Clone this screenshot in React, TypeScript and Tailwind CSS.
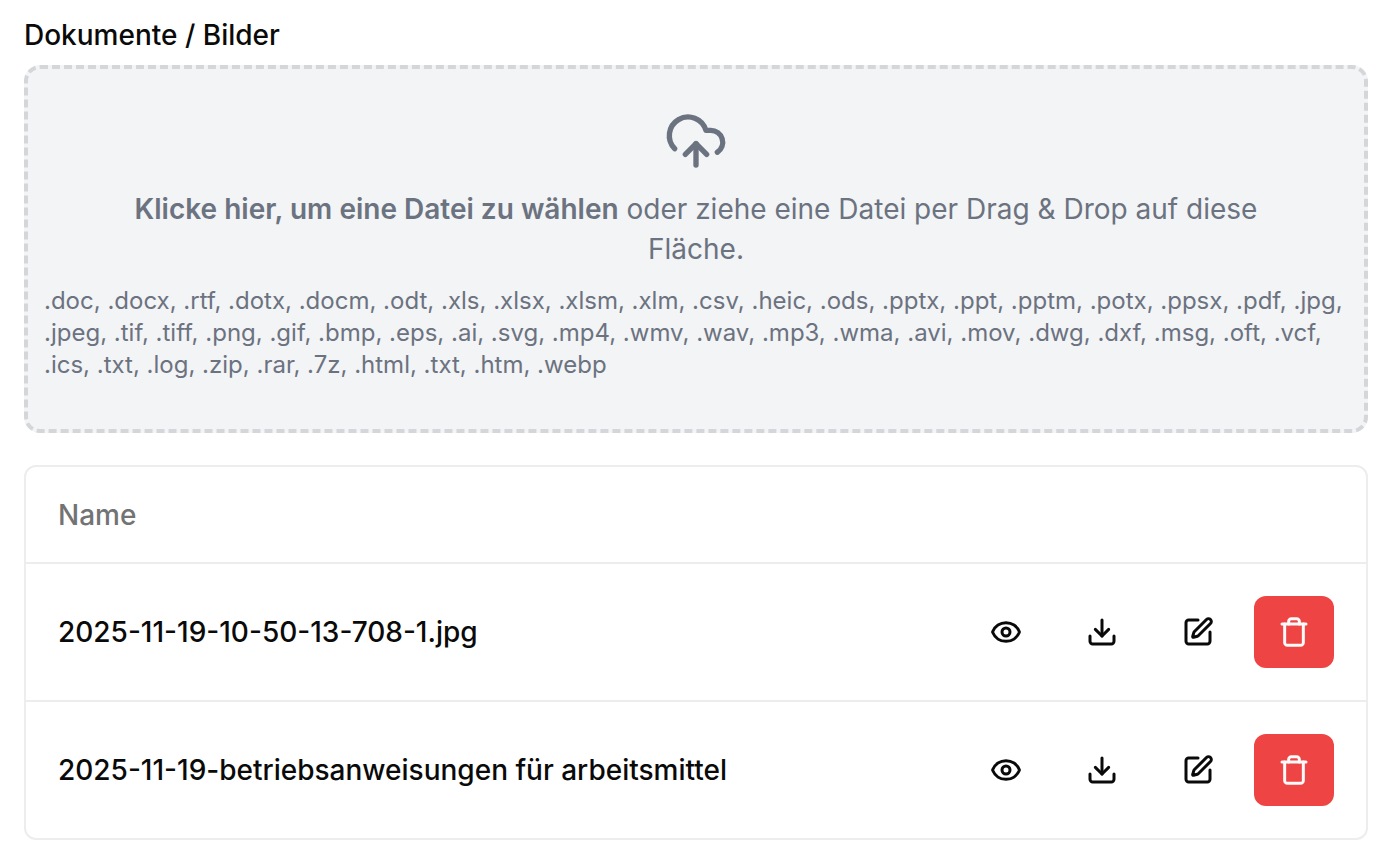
import React from 'react';
import { CloudUpload, Download, Eye, SquarePen, Trash } from 'lucide-react';

const acceptedTypes = [
  '.doc', '.docx', '.rtf', '.dotx', '.docm', '.odt', '.xls', '.xlsx', '.xlsm', '.xlm', '.csv', '.heic', '.ods',
  '.pptx', '.ppt', '.pptm', '.potx', '.ppsx', '.pdf', '.jpg', '.jpeg', '.tif', '.tiff', '.png', '.gif', '.bmp',
  '.eps', '.ai', '.svg', '.mp4', '.wmv', '.wav', '.mp3', '.wma', '.avi', '.mov', '.dwg', '.dxf', '.msg', '.oft',
  '.vcf', '.ics', '.txt', '.log', '.zip', '.rar', '.7z', '.html', '.txt', '.htm', '.webp',
];

const files = ['2025-11-19-10-50-13-708-1.jpg', '2025-11-19-betriebsanweisungen für arbeitsmittel'];

const IconButton = ({ label, danger = false, children }: { label: string; danger?: boolean; children: React.ReactNode }) => (
  <button
    type="button"
    aria-label={label}
    className={`flex h-18 w-20 items-center justify-center rounded-xl ${danger ? 'bg-[#ef4444] text-neutral-50' : 'hover:bg-neutral-100'}`}
  >
    {children}
  </button>
);

const Dropzone = () => (
  <label
    htmlFor="file-upload"
    className="flex cursor-pointer flex-col items-center rounded-2xl border-4 border-dashed border-[#d4d6d9] bg-[#f3f4f6] px-4 pt-10 pb-12 text-[#6b7280]"
  >
    <CloudUpload size={64} className="mb-4" />
    <span className="mb-4 max-w-[1180px] text-center text-[28px] leading-10">
      <span className="font-semibold">Klicke hier, um eine Datei zu wählen</span> oder ziehe eine Datei per Drag &amp; Drop
      auf diese Fläche.
    </span>
    <span className="w-full text-[24px] leading-8">{acceptedTypes.join(', ')}</span>
    <input id="file-upload" type="file" multiple className="sr-only" />
  </label>
);

const FileTable = () => (
  <div className="rounded-xl border-2 border-[#ededed]">
    <table className="w-full text-left text-[28px] leading-10">
      <thead>
        <tr className="border-b-2 border-[#ededed]">
          <th scope="col" colSpan={2} className="h-24 px-8 font-medium text-[#737373]">Name</th>
        </tr>
      </thead>
      <tbody>
        {files.map((file) => (
          <tr key={file} className="border-b-2 border-[#ededed] last:border-b-0">
            <td className="px-8 py-8 font-medium">{file}</td>
            <td className="px-8 py-8">
              <div className="flex justify-end gap-4">
                <IconButton label="Ansehen"><Eye size={32} strokeWidth={2.25} /></IconButton>
                <IconButton label="Herunterladen"><Download size={32} strokeWidth={2.25} /></IconButton>
                <IconButton label="Bearbeiten"><SquarePen size={32} strokeWidth={2.25} /></IconButton>
                <IconButton label="Löschen" danger><Trash size={32} strokeWidth={2.25} /></IconButton>
              </div>
            </td>
          </tr>
        ))}
      </tbody>
    </table>
  </div>
);

const App = () => {
  return (
    <main className="min-h-screen bg-white pt-[15px] pr-3 pb-5 pl-6 font-['Inter',sans-serif] text-neutral-950">
      <h2 className="mb-2.5 text-[28px] leading-10 font-medium">Dokumente / Bilder</h2>
      <Dropzone />
      <div className="mt-8">
        <FileTable />
      </div>
    </main>
  );
};

export default App;
